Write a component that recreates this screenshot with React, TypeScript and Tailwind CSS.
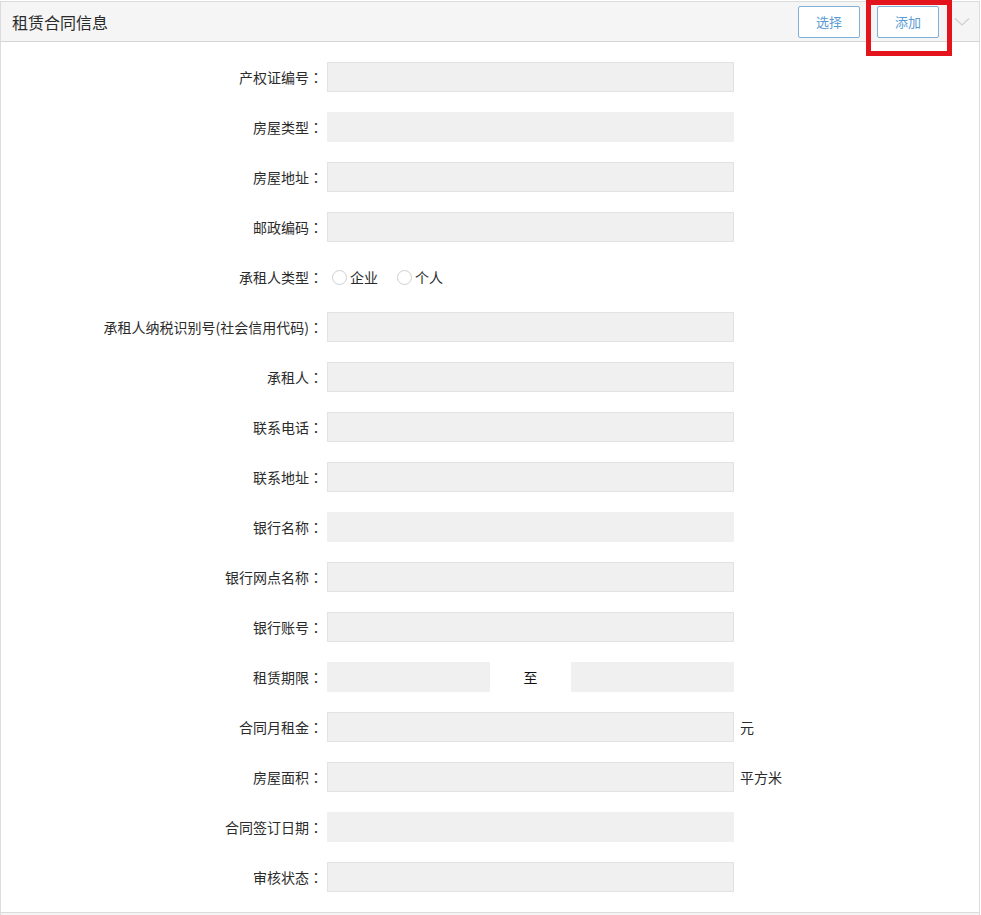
import type { ReactNode } from 'react';

type Row = {
  label: string;
  kind?: 'input' | 'radio' | 'range';
  border?: boolean;
  suffix?: string;
};

const rows: Row[] = [
  { label: '产权证编号', border: true },
  { label: '房屋类型' },
  { label: '房屋地址', border: true },
  { label: '邮政编码', border: true },
  { label: '承租人类型', kind: 'radio' },
  { label: '承租人纳税识别号(社会信用代码)', border: true },
  { label: '承租人', border: true },
  { label: '联系电话', border: true },
  { label: '联系地址', border: true },
  { label: '银行名称' },
  { label: '银行网点名称', border: true },
  { label: '银行账号', border: true },
  { label: '租赁期限', kind: 'range' },
  { label: '合同月租金', border: true, suffix: '元' },
  { label: '房屋面积', border: true, suffix: '平方米' },
  { label: '合同签订日期' },
  { label: '审核状态', border: true },
];

function Field({ border, className = 'w-[407px]' }: { border?: boolean; className?: string }) {
  return (
    <div
      className={`h-[30px] bg-[#f0f0f0] ${className} ${border ? 'border border-[#e2e2e2]' : ''}`}
    />
  );
}

function Radio({ label }: { label: string }) {
  return (
    <label className="flex items-center gap-[3px]">
      <span className="h-[15px] w-[15px] rounded-full border border-[#cfcfcf] bg-white" />
      <span>{label}</span>
    </label>
  );
}

function FormRow({ row }: { row: Row }) {
  let control: ReactNode;
  if (row.kind === 'radio') {
    control = (
      <div className="flex h-[30px] items-center gap-[19px] pl-[5px]">
        <Radio label="企业" />
        <Radio label="个人" />
      </div>
    );
  } else if (row.kind === 'range') {
    control = (
      <div className="flex items-center">
        <Field className="w-[163px]" />
        <span className="w-[81px] text-center text-[#111]">至</span>
        <Field className="w-[163px]" />
      </div>
    );
  } else {
    control = (
      <div className="flex items-center">
        <Field border={row.border} />
        {row.suffix && <span className="pl-[6px]">{row.suffix}</span>}
      </div>
    );
  }

  return (
    <div className="flex h-[30px] items-center">
      <div className="flex w-[326px] shrink-0 justify-end pr-[4px]">
        <span>{row.label}</span>
        <span className="w-[14px] text-center" style={{ fontFamily: '"Noto Sans CJK TC", sans-serif' }}>
          ：
        </span>
      </div>
      {control}
    </div>
  );
}

export default function App() {
  return (
    <div
      className="relative h-[915px] w-[981px] overflow-hidden bg-white text-[14px] text-[#2b2b2b]"
      style={{ fontFamily: '"Microsoft YaHei", "Noto Sans CJK SC", sans-serif' }}
    >
      <div className="mt-[1px] w-[980px] border border-[#dcdcdc]">
        <div className="flex h-[40px] items-center justify-between border-b border-[#d4d4d4] bg-[#f5f5f5] pl-[11px] pr-[9px]">
          <h2 className="text-[16px] text-[#2b2b2b]">租赁合同信息</h2>
          <div className="flex items-center">
            <button className="h-[32px] w-[62px] rounded-[2px] border border-[#7fb0da] bg-white text-[13px] text-[#5a9bd4]">
              选择
            </button>
            <button className="ml-[17px] h-[32px] w-[62px] rounded-[2px] border border-[#7fb0da] bg-white text-[13px] text-[#5a9bd4]">
              添加
            </button>
            <svg className="ml-[15px]" width="16" height="10" viewBox="0 0 16 10" fill="none">
              <path d="M1 1.5 L8 8 L15 1.5" stroke="#cfcfcf" strokeWidth="1.2" />
            </svg>
          </div>
        </div>
        <div className="flex flex-col gap-[20px] py-[20px]">
          {rows.map((row) => (
            <FormRow key={row.label} row={row} />
          ))}
        </div>
      </div>
      <div className="h-[10px] w-[980px] border-x border-[#dcdcdc] bg-[#f5f5f5]" />
      <div className="pointer-events-none absolute left-[866px] top-[0px] h-[56px] w-[86px] border-[5px] border-[#e3141c]" />
    </div>
  );
}
